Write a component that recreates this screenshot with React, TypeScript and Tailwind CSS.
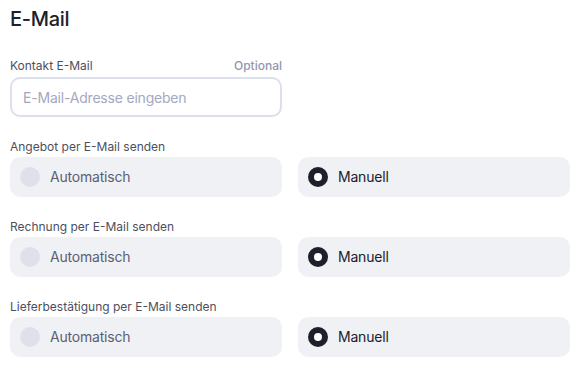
import React from "react";

function Radio({ checked, label }: { checked: boolean; label: string }) {
  return (
    <div className="flex h-10 items-center gap-[10px] rounded-[10px] bg-[#f0f1f5] pl-[10px]">
      {checked ? (
        <span className="box-border h-5 w-5 rounded-full border-[6px] border-[#1d202b] bg-white" />
      ) : (
        <span className="h-5 w-5 rounded-full bg-[#dfe0ea]" />
      )}
      <span className={"text-[14px] leading-5 tracking-[-0.2px] " + (checked ? "text-[#1d202b]" : "text-[#5b5f74]")}>{label}</span>
    </div>
  );
}

function Group({ label }: { label: string }) {
  return (
    <div className="mt-[22px]">
      <div className="mb-[2px] text-[12px] leading-4 text-[#4b4f60]">{label}</div>
      <div className="grid grid-cols-2 gap-4">
        <Radio checked={false} label="Automatisch" />
        <Radio checked={true} label="Manuell" />
      </div>
    </div>
  );
}

export default function App() {
  return (
    <div className="min-h-[371px] w-[582px] bg-white pl-[10px] pr-[12px] pt-[5px]" style={{ fontFamily: "Inter, 'Noto Sans', sans-serif" }}>
      <h1 className="text-[20px] font-medium leading-7 tracking-[-0.3px] text-[#1d202b]">E-Mail</h1>
      <div className="mt-[25px] w-[272px]">
        <div className="mb-[3px] flex items-center justify-between text-[12px] leading-4">
          <span className="text-[#4b4f60]">Kontakt E-Mail</span>
          <span className="font-medium text-[#9296ae]">Optional</span>
        </div>
        <div className="flex h-10 items-center rounded-[10px] border-2 border-[#dcdfec] pl-[11px]">
          <span className="text-[14px] tracking-[-0.2px] text-[#a4a8bf]">E-Mail-Adresse eingeben</span>
        </div>
      </div>
      <Group label="Angebot per E-Mail senden" />
      <Group label="Rechnung per E-Mail senden" />
      <Group label="Lieferbestätigung per E-Mail senden" />
    </div>
  );
}
